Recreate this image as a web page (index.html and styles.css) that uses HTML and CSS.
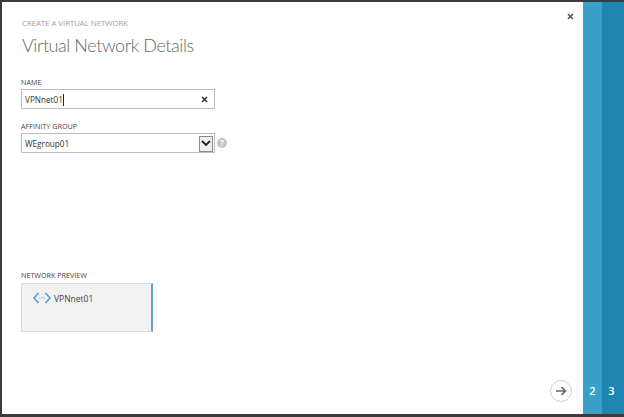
FILE: index.html
```html
<!DOCTYPE html>
<html lang="en">
<head>
<meta charset="utf-8">
<title>Virtual Network Details</title>
<link rel="stylesheet" href="styles.css">
</head>
<body>
<div class="window">
  <main class="panel">
    <button class="close" aria-label="Close">
      <svg width="7" height="7" viewBox="0 0 7 7"><path d="M1 1l5 5M6 1l-5 5" stroke="#555" stroke-width="1.6" fill="none"/></svg>
    </button>
    <div class="eyebrow">CREATE A VIRTUAL NETWORK</div>
    <h1 class="title">Virtual Network Details</h1>
    <label class="label label-name">NAME</label>
    <div class="input-row">
      <div class="input">
        <span class="value">VPNnet01</span><span class="caret"></span>
        <svg class="clear" width="7" height="7" viewBox="0 0 7 7"><path d="M1 1l5 5M6 1l-5 5" stroke="#333" stroke-width="1.5" fill="none"/></svg>
      </div>
    </div>
    <label class="label label-group">AFFINITY GROUP</label>
    <div class="input-row">
      <div class="input select">
        <span class="value">WEgroup01</span>
        <span class="arrow"><svg width="10" height="7" viewBox="0 0 10 7"><path d="M1 1l4 4 4-4" stroke="#222" stroke-width="1.8" fill="none"/></svg></span>
      </div>
      <span class="help">?</span>
    </div>
    <label class="label label-preview">NETWORK PREVIEW</label>
    <div class="preview">
      <svg class="net-icon" width="18" height="12" viewBox="0 0 18 12">
        <path d="M5.500 1L1 6l4.500 5M12.500 1L17 6l-4.500 5" stroke="#4a9fdc" stroke-width="1.500" fill="none"/>
        <path d="M6.500 6h1M8.500 6h1M10.500 6h1" stroke="#4a9fdc" stroke-width="1"/>
      </svg>
      <span class="preview-name">VPNnet01</span>
    </div>
    <div class="footer">
      <button class="next" aria-label="Next">
        <svg width="12" height="10" viewBox="0 0 12 10"><path d="M1 5h9M6.500 1l4 4-4 4" stroke="#666" stroke-width="1.600" fill="none"/></svg>
      </button>
    </div>
  </main>
  <div class="step step-2"><span>2</span></div>
  <div class="step step-3"><span>3</span></div>
</div>
</body>
</html>
```

FILE: styles.css
```css
* { box-sizing: border-box; }
html, body { margin: 0; height: 100%; }
body { background: #3c3c3c; font-family: "Open Sans", "Liberation Sans", sans-serif; overflow: hidden; }
.window { display: flex; width: 624px; height: 417px; padding: 2px 0 3px 2px; }
.panel { position: relative; flex: 0 0 581px; background: #fff; padding: 17px 0 0 19px; display: flex; flex-direction: column; align-items: flex-start; }
.close { position: absolute; top: 11px; right: 9px; width: 7px; height: 7px; padding: 0; border: 0; background: none; display: flex; }
.eyebrow { font-size: 7.750px; line-height: 9px; font-weight: 400; color: #a0a0a0; padding-left: 1px; }
.title { margin: 5px 0 0; padding-left: 1px; font-family: Lato, "Open Sans", sans-serif; font-size: 18px; letter-spacing: -0.43px; line-height: 25px; font-weight: 300; color: #666; }
.label { display: block; font-size: 7.200px; line-height: 9px; font-weight: 400; color: #444; }
.label-name { margin-top: 20px; }
.label-group { margin-top: 13px; }
.label-preview { margin-top: 118px; }
.input-row { display: flex; align-items: center; gap: 2px; margin-top: 2px; }
.input { width: 194px; height: 20px; border: 1px solid #bdbdbd; display: flex; align-items: center; padding: 1px 0 0 3px; background: #fff; font-size: 8.200px; color: #333; }
.value { line-height: 12px; }
.caret { width: 1px; height: 12px; background: #222; }
.clear { margin-left: auto; margin-right: 6px; }
.select { justify-content: space-between; padding-right: 1px; }
.arrow { width: 14px; height: 16px; background: #f0f0f0; border: 1px solid #8a8a8a; display: flex; align-items: center; justify-content: center; }
.help { width: 10px; height: 10px; border-radius: 50%; background: #c4c4c4; color: #fff; font-size: 8px; font-weight: 700; line-height: 10px; text-align: center; }
.preview { margin-top: 3px; width: 132px; height: 49px; background: #f1f1f1; border: 1px solid #dcdcdc; border-right: 2px solid #5aa5db; padding: 8px 0 0 11px; display: flex; align-items: flex-start; gap: 3px; }
.net-icon { flex: none; }
.preview-name { font-size: 8.500px; line-height: 14px; color: #444; }
.footer { margin-top: auto; align-self: flex-end; padding: 0 11px 12px 0; }
.next { width: 22px; height: 22px; padding: 0; border-radius: 50%; border: 1.500px solid #cfcfcf; background: #fff; display: flex; align-items: center; justify-content: center; }
.step { display: flex; align-items: flex-end; justify-content: center; padding-bottom: 16px; color: #fff; font-size: 11px; line-height: 14px; font-weight: 600; }
.step-2 { flex: 0 0 19px; background: #3a9fc9; }
.step-3 { flex: 0 0 22px; padding-right: 3px; background: #1f86b1; }
```
